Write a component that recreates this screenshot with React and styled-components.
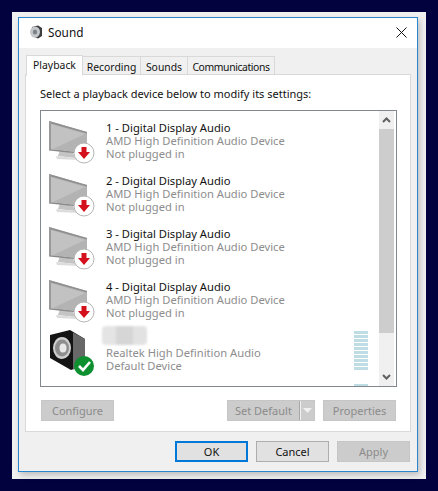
import React from "react";
import styled, { createGlobalStyle } from "styled-components";

const GlobalStyle = createGlobalStyle`
	html, body {
		margin: 0;
		background: #02023e;
		font-family: "Noto Sans", "Open Sans", sans-serif;
		font-size: 12px;
	}
`;

const Page = styled.div`
	width: 438px;
	height: 491px;
	padding: 12px;
	box-sizing: border-box;
	overflow: hidden;
`;

const Backdrop = styled.div`
	width: 414px;
	height: 467px;
	padding: 5px 8px 7px 6px;
	box-sizing: border-box;
	background: #f1f1f1;
`;

const Window = styled.div`
	width: 400px;
	height: 455px;
	box-sizing: border-box;
	border: 1px solid #2a86cf;
	background: #f0f0f0;
	box-shadow: 2px 3px 6px rgba(0, 0, 0, 0.22);
	display: flex;
	flex-direction: column;
`;

const TitleBar = styled.div`
	height: 30px;
	flex: none;
	box-sizing: border-box;
	background: #fff;
	display: flex;
	align-items: center;
	padding: 0 10px 2px;
	gap: 5px;
	font-size: 11.8px;
	color: #111;
`;

const CloseButton = styled.svg`
	margin-left: auto;
`;

const Tabs = styled.div`
	display: flex;
	align-items: flex-end;
	height: 27px;
	flex: none;
	padding-left: 7px;
	position: relative;
	z-index: 1;
`;

const Tab = styled.div`
	width: ${(p) => p.$width}px;
	height: ${(p) => (p.$active ? "21px" : "19px")};
	box-sizing: border-box;
	margin-right: -1px;
	border: 1px solid #d9d9d9;
	border-bottom: ${(p) => (p.$active ? "1px solid #fff" : "1px solid #d9d9d9")};
	background: ${(p) => (p.$active ? "#fff" : "#f0f0f0")};
	display: flex;
	align-items: center;
	justify-content: center;
	font-size: 10.4px;
	letter-spacing: ${(p) => (p.$tight ? "-0.4px" : "0")};
	color: #111;
	white-space: nowrap;
	margin-bottom: ${(p) => (p.$active ? "-1px" : "0")};
	padding-top: ${(p) => (p.$active ? "0" : "2px")};
	padding-bottom: ${(p) => (p.$active ? "2px" : "0")};
	z-index: ${(p) => (p.$active ? 1 : 0)};
`;

const Panel = styled.div`
	width: 386px;
	height: 358px;
	margin-left: 6px;
	margin-top: -1px;
	box-sizing: border-box;
	border: 1px solid #d9d9d9;
	background: #fff;
	padding: 0 14px;
	flex: none;
`;

const Prompt = styled.p`
	margin: 0;
	height: 35px;
	line-height: 38px;
	font-size: 11px;
	color: #111;
	white-space: nowrap;
`;

const ListBox = styled.div`
	width: 357px;
	height: 277px;
	box-sizing: border-box;
	border: 1px solid #82878e;
	display: flex;
	background: #fff;
`;

const Rows = styled.div`
	flex: 1;
	overflow: hidden;
	padding-top: 6px;
`;

const Row = styled.div`
	height: 53px;
	display: flex;
	position: relative;
`;

const RowIcon = styled.svg`
	flex: none;
	margin-left: 4px;
	margin-top: 1px;
`;

const RowText = styled.div`
	margin-left: 9px;
	font-size: 11.2px;
	line-height: 13px;
	padding-top: 4px;
	white-space: nowrap;
`;

const DeviceName = styled.div`
	color: #111;
`;

const DeviceInfo = styled.div`
	color: #8d8d8d;
`;

const BlurredName = styled.div`
	position: absolute;
	left: 61px;
	top: -3px;
	width: 45px;
	height: 19px;
	border-radius: 4px;
	background: linear-gradient(90deg, #e4e4e4 0 32%, #d6d6d6 32% 68%, #e2e2e2 68%);
	filter: blur(1px);
`;

const LevelMeter = styled.div`
	position: absolute;
	left: 313px;
	top: 2px;
	width: 14px;
	height: 39px;
	background: repeating-linear-gradient(180deg, #bfdde4 0 3px, #fff 3px 4px);
`;

const LevelTail = styled.div`
	position: absolute;
	left: 313px;
	top: 55px;
	width: 14px;
	height: 2px;
	background: #bfdde4;
`;

const ScrollBar = styled.div`
	width: 15px;
	flex: none;
	margin-right: 2px;
	background: #f0f0f0;
	display: flex;
	flex-direction: column;
`;

const ScrollArrow = styled.div`
	height: 18px;
	flex: none;
	display: flex;
	align-items: center;
	justify-content: center;
`;

const ScrollThumb = styled.div`
	height: 204px;
	flex: none;
	background: #cdcdcd;
`;

const ScrollTrack = styled.div`
	flex: 1;
`;

const ButtonRow = styled.div`
	display: flex;
	align-items: center;
	margin-top: 13px;
	padding-left: 1px;
`;

const Button = styled.div`
	width: ${(p) => p.$width || 73}px;
	height: 21px;
	box-sizing: border-box;
	border: 1px solid ${(p) => (p.$disabled ? "#c6c6c6" : "#adadad")};
	background: ${(p) => (p.$disabled ? "#cccccc" : "#e1e1e1")};
	color: ${(p) => (p.$disabled ? "#8b8b8b" : "#111")};
	display: flex;
	align-items: center;
	justify-content: center;
	font-size: 11px;
	flex: none;
`;

const DefaultButton = styled(Button)`
	border: 2px solid #0078d7;
`;

const SplitButton = styled(Button)`
	margin-left: 113px;
	margin-right: 8px;
	justify-content: flex-start;
	position: relative;
	padding-left: 7px;
`;

const SplitArrow = styled.div`
	position: absolute;
	right: 0;
	top: 0;
	bottom: 0;
	width: 14px;
	border-left: 1px solid #a8a8a8;
	box-shadow: inset 1px 0 0 #f0f0f0;
	display: flex;
	align-items: center;
	justify-content: center;
`;

const Footer = styled.div`
	display: flex;
	gap: 8px;
	justify-content: flex-end;
	padding-right: 7px;
	margin-top: 9px;
`;

function MonitorIcon() {
	return (
		<RowIcon width="52" height="48" viewBox="0 0 52 48">
			<path d="M15 32 L28 35 L30 40 L13 38 Z" fill="#c4c4c4" />
			<path d="M11 38 L31 40 L34 42 L12 41 Z" fill="#dcdcdc" />
			<path d="M4 3 L42 14 L42 35 L4 31 Z" fill="#b3b3b3" />
			<path d="M6 6 L40 16 L8 31 L6 31 Z" fill="#c2c2c2" />
			<path d="M4 3 L42 14 L42 15.5 L4 5 Z" fill="#8f8f8f" />
			<path d="M4 3 L6 4 L6 31 L4 31 Z" fill="#9a9a9a" />
			<path d="M4 31 L42 35 L42 36.5 L4 32.5 Z" fill="#8a8a8a" />
			<circle cx="39" cy="35" r="10" fill="#fff" stroke="#b5b5b5" />
			<path d="M36.5 29 H41.5 V34 H45 L39 41 L33 34 H36.5 Z" fill="#d4101c" />
		</RowIcon>
	);
}

function SpeakerIcon() {
	return (
		<RowIcon width="52" height="48" viewBox="0 0 52 48">
			<path d="M5 5 L25 0 L40 9 L40 35 L26 40 L5 28 Z" fill="#141414" />
			<path d="M28 2.5 L40 9 L40 35 L28 39.5 Z" fill="#686868" />
			<ellipse cx="17" cy="18" rx="9" ry="11" fill="#cfcfcf" />
			<ellipse cx="17" cy="18" rx="7" ry="8.5" fill="#8e8e8e" />
			<ellipse cx="18" cy="18" rx="3.5" ry="4.5" fill="#e8e8e8" />
			<circle cx="39" cy="36" r="10" fill="#0e9030" />
			<path d="M34 36 L38 40 L45 32" fill="none" stroke="#fff" strokeWidth="2.6" />
		</RowIcon>
	);
}

function Chevron({ up }) {
	return (
		<svg width="9" height="6" viewBox="0 0 9 6">
			<path
				d={up ? "M1 5 L4.5 1.5 L8 5" : "M1 1 L4.5 4.5 L8 1"}
				fill="none"
				stroke="#606060"
				strokeWidth="2"
			/>
		</svg>
	);
}

const devices = [1, 2, 3, 4];

export default function App() {
	return (
		<Page>
			<GlobalStyle />
			<Backdrop>
				<Window>
					<TitleBar>
						<svg width="14" height="14" viewBox="0 0 14 14">
							<path d="M3 2 L9 0.5 L13 3 L13 11 L9 13.5 L3 11 Z" fill="#3d3d3d" />
							<ellipse cx="6" cy="7" rx="5" ry="5.5" fill="#c4c8cc" />
							<ellipse cx="6" cy="7" rx="2.2" ry="2.6" fill="#7d8286" />
						</svg>
						<span>Sound</span>
						<CloseButton width="11" height="11" viewBox="0 0 11 11">
							<path d="M0.5 0.5 L10.5 10.5 M10.5 0.5 L0.5 10.5" stroke="#111" strokeWidth="1" />
						</CloseButton>
					</TitleBar>
					<Tabs>
						<Tab $active $width={57}>Playback</Tab>
						<Tab $width={59}>Recording</Tab>
						<Tab $width={48}>Sounds</Tab>
						<Tab $width={88} $tight>Communications</Tab>
					</Tabs>
					<Panel>
						<Prompt>Select a playback device below to modify its settings:</Prompt>
						<ListBox>
							<Rows>
								{devices.map((n) => (
									<Row key={n}>
										<MonitorIcon />
										<RowText>
											<DeviceName>{n} - Digital Display Audio</DeviceName>
											<DeviceInfo>AMD High Definition Audio Device</DeviceInfo>
											<DeviceInfo>Not plugged in</DeviceInfo>
										</RowText>
									</Row>
								))}
								<Row>
									<SpeakerIcon />
									<RowText>
										<DeviceName>&nbsp;</DeviceName>
										<DeviceInfo>Realtek High Definition Audio</DeviceInfo>
										<DeviceInfo>Default Device</DeviceInfo>
									</RowText>
									<BlurredName />
									<LevelMeter />
									<LevelTail />
								</Row>
							</Rows>
							<ScrollBar>
								<ScrollArrow>
									<Chevron up />
								</ScrollArrow>
								<ScrollThumb />
								<ScrollTrack />
								<ScrollArrow>
									<Chevron />
								</ScrollArrow>
							</ScrollBar>
						</ListBox>
						<ButtonRow>
							<Button $disabled>Configure</Button>
							<SplitButton $disabled $width={88}>
								Set Default
								<SplitArrow>
									<svg width="9" height="5" viewBox="0 0 9 5">
										<path d="M0 0 H9 L4.5 5 Z" fill="#f0f0f0" />
									</svg>
								</SplitArrow>
							</SplitButton>
							<Button $disabled>Properties</Button>
						</ButtonRow>
					</Panel>
					<Footer>
						<DefaultButton>OK</DefaultButton>
						<Button>Cancel</Button>
						<Button $disabled>Apply</Button>
					</Footer>
				</Window>
			</Backdrop>
		</Page>
	);
}
